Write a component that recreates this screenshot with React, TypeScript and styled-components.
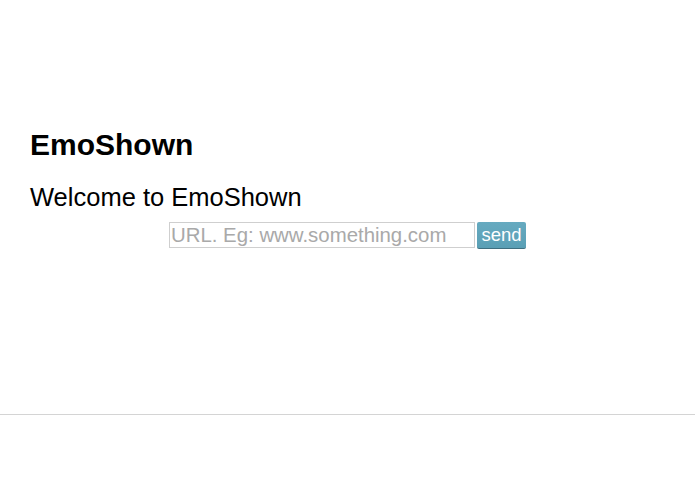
import React from 'react'
import styled, { createGlobalStyle } from 'styled-components'

const GlobalStyle = createGlobalStyle`
  body {
    margin: 0;
    background: #fff;
    font-family: 'Liberation Sans', Arial, sans-serif;
    color: #000;
  }
`

const Page = styled.div`
  display: flex;
  flex-direction: column;
  min-height: 494px;
`

const Main = styled.main`
  height: 414px;
  padding: 128px 30px 0 30px;
  box-sizing: border-box;
`

const Title = styled.h1`
  margin: 0;
  font-size: 30px;
  line-height: 34px;
  font-weight: bold;
`

const Welcome = styled.p`
  margin: 21px 0 0 0;
  font-size: 25.5px;
  line-height: 29px;
`

const Form = styled.form`
  display: flex;
  justify-content: center;
  align-items: flex-start;
  gap: 2px;
  margin: 10px 0 0 0;
`

const UrlInput = styled.input`
  width: 306px;
  height: 26px;
  box-sizing: border-box;
  border: 1px solid #cfcfcf;
  padding: 0 1px;
  font-family: 'Liberation Sans', Arial, sans-serif;
  font-size: 20.4px;
  color: #333;
  outline: none;

  &::placeholder {
    color: #a9a9a9;
  }
`

const SendButton = styled.button`
  width: 49px;
  height: 27px;
  box-sizing: border-box;
  border: none;
  border-bottom: 1px solid #3f6f80;
  border-radius: 2px;
  background: linear-gradient(#66aac0, #5a9fb5);
  color: #fff;
  font-family: 'Liberation Sans', Arial, sans-serif;
  font-size: 18.5px;
  padding: 0;
  cursor: pointer;
`

const Footer = styled.footer`
  border-top: 1px solid #d4d4d4;
  flex: 1;
`

export default function App() {
  return (
    <Page>
      <GlobalStyle />
      <Main>
        <Title>EmoShown</Title>
        <Welcome>Welcome to EmoShown</Welcome>
        <Form onSubmit={(e) => e.preventDefault()}>
          <UrlInput type="text" placeholder="URL. Eg: www.something.com" />
          <SendButton type="submit">send</SendButton>
        </Form>
      </Main>
      <Footer />
    </Page>
  )
}
